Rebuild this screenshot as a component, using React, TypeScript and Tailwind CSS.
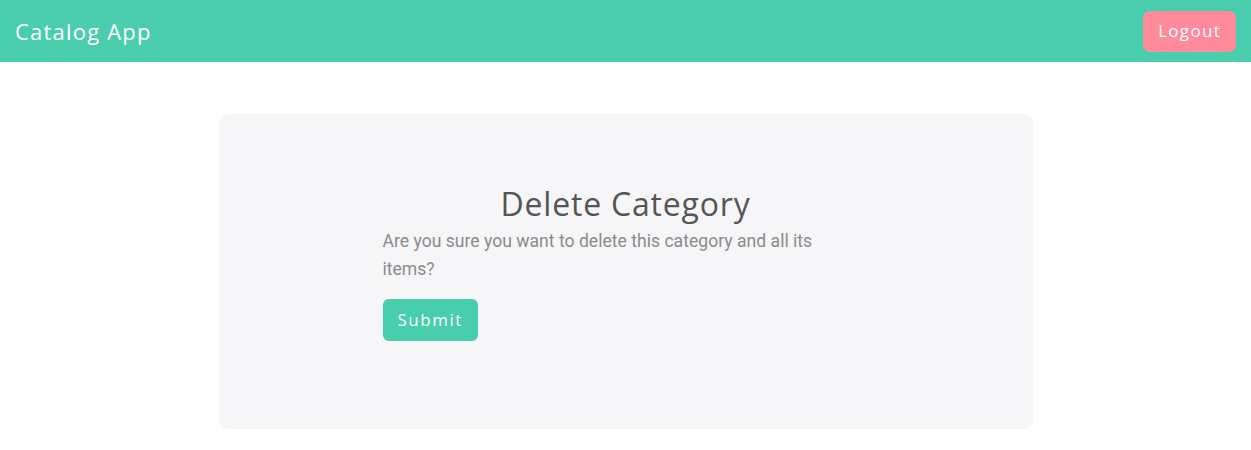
export default function App() {
  return (
    <div className="min-h-[450px] bg-white font-['Roboto',sans-serif]">
      <header className="flex h-[62px] items-center justify-between bg-[#4acdad] pl-[15px] pr-[15px]">
        <span className="font-['Open_Sans',sans-serif] text-[22px] tracking-[1.2px] text-white">Catalog App</span>
        <button className="h-[41px] rounded-[7px] bg-[#ff8a99] px-[15px] font-['Open_Sans',sans-serif] text-[17px] tracking-[1.3px] text-white">
          Logout
        </button>
      </header>

      <main className="flex justify-center pt-[52px]">
        <div className="flex h-[315px] w-[814px] justify-center rounded-[10px] bg-[#f6f6f8] pt-[70px]">
          <div className="w-[486px]">
            <h1 className="text-center font-['Open_Sans',sans-serif] text-[32px] leading-[40px] tracking-[0.8px] text-[#555555]">
              Delete Category
            </h1>
            <p className="mt-[3px] text-[17.6px] leading-[28px] text-[#8c8a8a]">
              Are you sure you want to delete this category and all its items?
            </p>
            <button className="mt-[16px] h-[42px] rounded-[6px] bg-[#48cdad] px-[15px] font-['Open_Sans',sans-serif] text-[17px] tracking-[1.5px] text-white">
              Submit
            </button>
          </div>
        </div>
      </main>
    </div>
  );
}
